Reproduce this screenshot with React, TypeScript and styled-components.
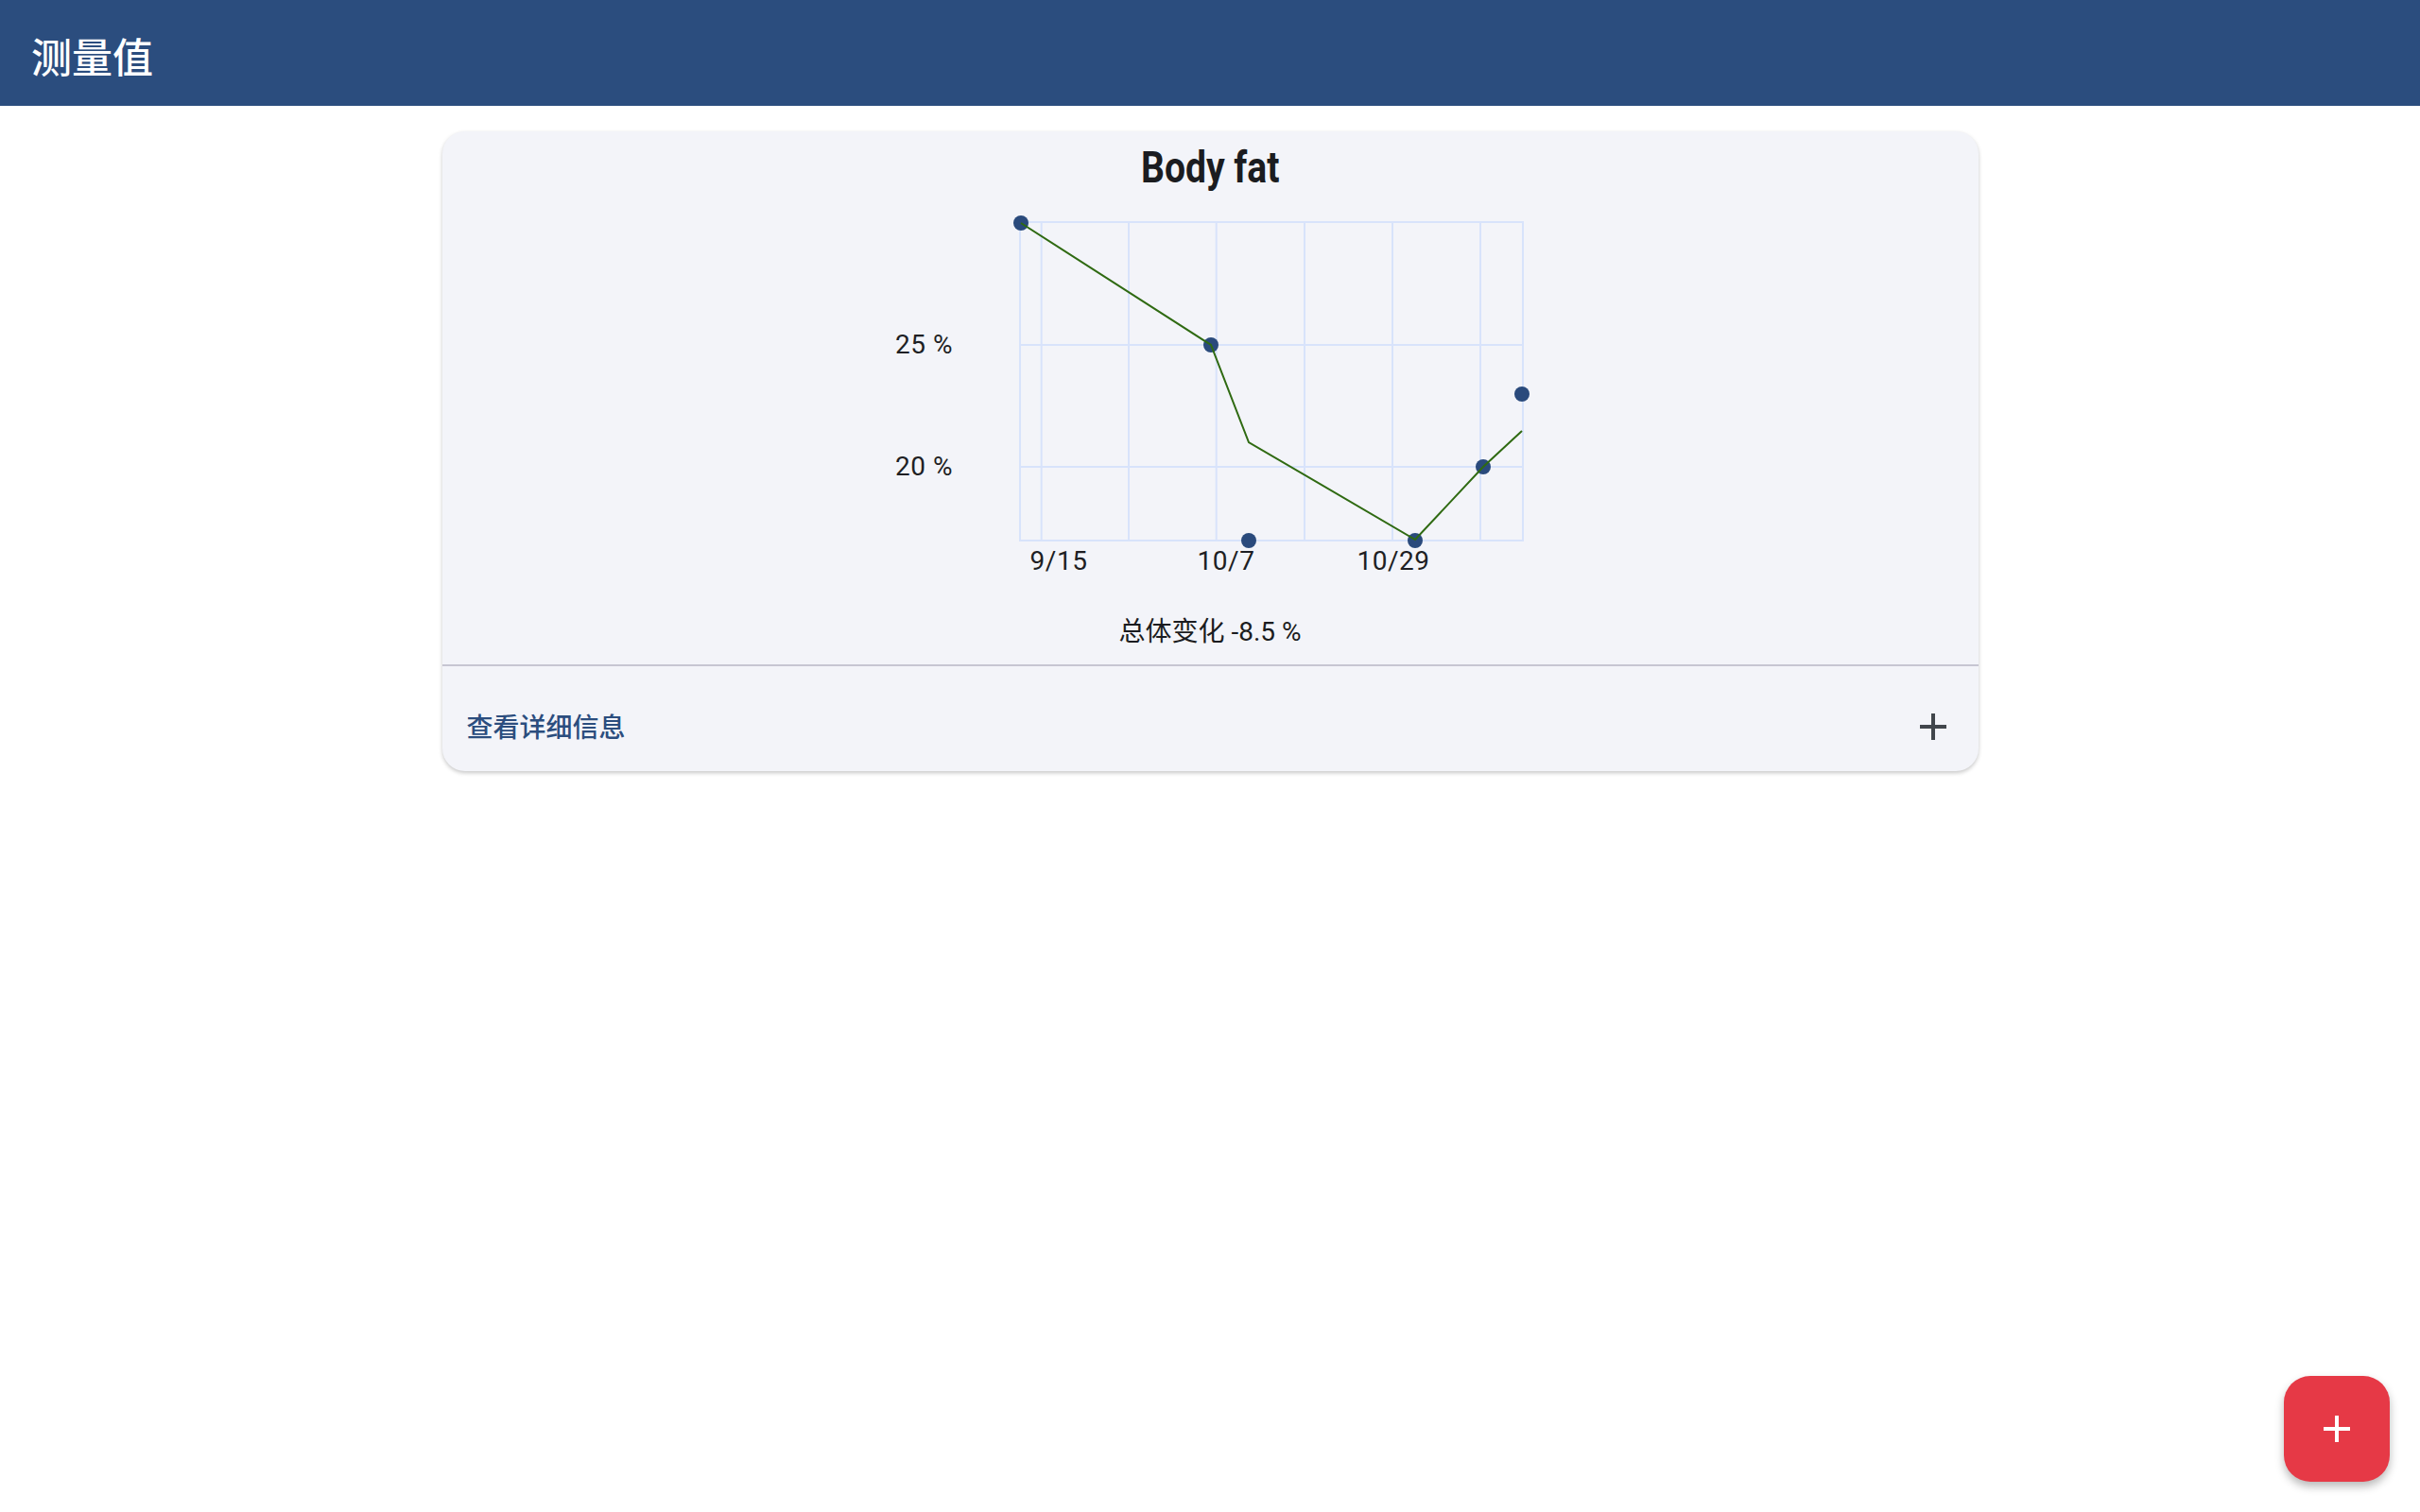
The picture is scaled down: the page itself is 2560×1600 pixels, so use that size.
import React from 'react'
import styled, { createGlobalStyle } from 'styled-components'

const GlobalStyle = createGlobalStyle`
  html, body {
    margin: 0;
    padding: 0;
    background: #ffffff;
    font-family: Roboto, "Noto Sans CJK SC", sans-serif;
  }
`

const StyledPage = styled.div`
  min-height: 100vh;
  display: flex;
  flex-direction: column;
`

const StyledTopBar = styled.header`
  height: 112px;
  background: #2b4d7e;
  display: flex;
  align-items: center;
  padding-left: 33px;
  box-sizing: border-box;

  & > h1 {
    margin: 0;
    padding-top: 5px;
    color: #ffffff;
    font-family: "Noto Sans CJK SC", sans-serif;
    font-size: 43px;
    font-weight: 500;
    line-height: 1;
  }
`

const StyledMain = styled.main`
  display: flex;
  justify-content: center;
  padding-top: 27px;
`

const StyledCard = styled.section`
  width: 1625px;
  background: #f3f4f9;
  border-radius: 24px;
  box-shadow: 0 2px 4px rgba(0, 0, 0, 0.22);
  overflow: hidden;
`

const StyledChartSection = styled.div`
  display: flex;
  flex-direction: column;
  align-items: center;
  padding: 10px 0 14px;
  border-bottom: 2px solid #c6c6d2;
`

const StyledChartTitle = styled.h2`
  margin: 0;
  font-family: Roboto, sans-serif;
  font-size: 46px;
  line-height: 56px;
  font-weight: 700;
  color: #1b1c20;
  transform: scaleX(0.85);
`

const StyledSummary = styled.p`
  margin: 24px 0 0;
  font-size: 28px;
  line-height: 40px;
  color: #1b1c20;
`

const StyledDetailsRow = styled.div`
  display: flex;
  align-items: center;
  justify-content: space-between;
  padding: 46px 34px 25px 26px;
  color: #2b4d7e;
  font-size: 28px;
  line-height: 40px;
  font-weight: 500;
  cursor: pointer;

  & > svg {
    width: 28px;
    height: 28px;
    margin-top: -4px;
  }
`

const StyledFab = styled.button`
  position: fixed;
  right: 32px;
  bottom: 32px;
  width: 112px;
  height: 112px;
  border: none;
  border-radius: 28px;
  background: #e63946;
  box-shadow: 0 5px 10px rgba(0, 0, 0, 0.28);
  display: flex;
  align-items: center;
  justify-content: center;
  padding: 0;

  & > svg {
    width: 28px;
    height: 28px;
  }
`

// plot frame, in svg coordinates
const plot = { left: 199, right: 731, top: 30, bottom: 367 }
const verticalGrid = [221.7, 314, 406.7, 500, 593, 686]
const horizontalGrid = [160, 289]
const points = [
  [200, 31],
  [401, 160],
  [441, 367],
  [617, 367],
  [689, 289],
  [730, 212],
]
const line = [
  [200, 31],
  [401, 160],
  [441, 263],
  [617, 366],
  [689, 289],
  [730, 251],
]
const yLabels = [
  { y: 169, text: '25 %' },
  { y: 298, text: '20 %' },
]
const xLabels = [
  { x: 240, text: '9/15' },
  { x: 417, text: '10/7' },
  { x: 594, text: '10/29' },
]

const BodyFatChart = () => (
  <svg width="800" height="420" viewBox="0 0 800 420" style={{ display: 'block' }}>
    <g stroke="#d8e3fb" strokeWidth="2" fill="none">
      <rect x={plot.left} y={plot.top} width={plot.right - plot.left} height={plot.bottom - plot.top} />
      {verticalGrid.map((x) => (
        <line key={x} x1={x} x2={x} y1={plot.top} y2={plot.bottom} />
      ))}
      {horizontalGrid.map((y) => (
        <line key={y} x1={plot.left} x2={plot.right} y1={y} y2={y} />
      ))}
    </g>
    <g fontFamily="Roboto, sans-serif" fontSize="28" fill="#1e1f24" letterSpacing="0.5">
      {yLabels.map((l) => (
        <text key={l.text} x="128" y={l.y} textAnchor="end">
          {l.text}
        </text>
      ))}
      {xLabels.map((l) => (
        <text key={l.text} x={l.x} y="398" textAnchor="middle">
          {l.text}
        </text>
      ))}
    </g>
    <g fill="#2a4a7c">
      {points.map(([x, y]) => (
        <circle key={`${x}-${y}`} cx={x} cy={y} r="8" />
      ))}
    </g>
    <polyline points={line.map((p) => p.join(',')).join(' ')} fill="none" stroke="#2f6a12" strokeWidth="2" />
  </svg>
)

const PlusIcon = ({ color }: { color: string }) => (
  <svg viewBox="0 0 28 28">
    <path d="M14 0v28M0 14h28" stroke={color} strokeWidth="4" fill="none" />
  </svg>
)

const App = () => {
  return (
    <StyledPage>
      <GlobalStyle />
      <StyledTopBar>
        <h1>测量值</h1>
      </StyledTopBar>
      <StyledMain>
        <StyledCard>
          <StyledChartSection>
            <StyledChartTitle>Body fat</StyledChartTitle>
            <BodyFatChart />
            <StyledSummary>总体变化 -8.5 %</StyledSummary>
          </StyledChartSection>
          <StyledDetailsRow>
            <span>查看详细信息</span>
            <PlusIcon color="#41464c" />
          </StyledDetailsRow>
        </StyledCard>
      </StyledMain>
      <StyledFab aria-label="add">
        <PlusIcon color="#ffffff" />
      </StyledFab>
    </StyledPage>
  )
}

export default App
